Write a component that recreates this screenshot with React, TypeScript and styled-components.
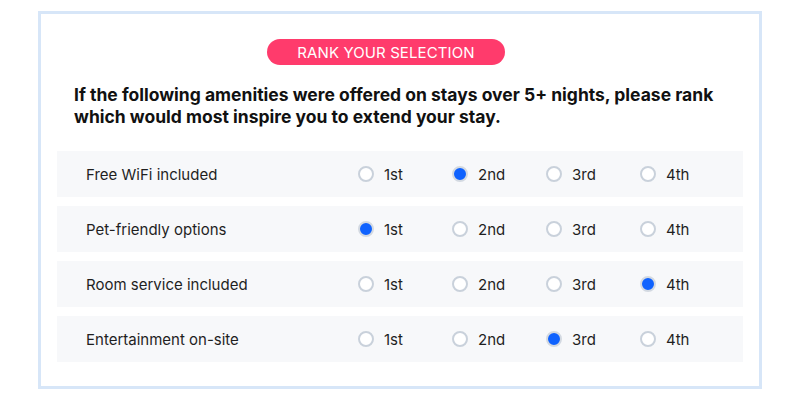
import React from "react";
import styled, { createGlobalStyle } from "styled-components";

const Global = createGlobalStyle`
  html, body { margin: 0; padding: 0; background: #ffffff; }
  body { font-family: "Inter", "Open Sans", sans-serif; }
  * { box-sizing: border-box; }
`;

const Page = styled.div`
  width: 800px;
  height: 400px;
  padding-top: 11px;
  display: flex;
  justify-content: center;
  align-items: flex-start;
`;

const Card = styled.div`
  width: 724px;
  height: 378px;
  border: 3px solid #d7e6f8;
  background: #ffffff;
  padding: 25px 16px 0 16px;
  display: flex;
  flex-direction: column;
`;

const PillWrap = styled.div`
  display: flex;
  justify-content: center;
  padding-right: 28px;
`;

const Pill = styled.div`
  height: 26px;
  width: 238px;
  border-radius: 13px;
  background: #ff3b6c;
  color: #ffffff;
  font-size: 15px;
  font-weight: 400;
  letter-spacing: 0.1px;
  display: flex;
  align-items: center;
  justify-content: center;
`;

const Heading = styled.h2`
  margin: 19px 0 0 17px;
  font-size: 17.5px;
  line-height: 22px;
  font-weight: 700;
  color: #111111;
`;

const Rows = styled.div`
  margin-top: 23px;
  display: flex;
  flex-direction: column;
  gap: 9px;
`;

const Row = styled.div`
  height: 46px;
  background: #f7f8fa;
  display: grid;
  grid-template-columns: 1fr repeat(4, 94px);
  align-items: center;
  padding: 0 9px 0 29px;
`;

const Label = styled.span`
  font-size: 15px;
  color: #1f1f1f;
`;

const Option = styled.label`
  display: flex;
  align-items: center;
  gap: 10px;
  font-size: 15px;
  color: #1f1f1f;
`;

const Radio = styled.span<{ $checked: boolean }>`
  width: 16px;
  height: 16px;
  border-radius: 50%;
  border: 2px solid ${(p) => (p.$checked ? "#d3d9e1" : "#c9d1db")};
  background: ${(p) => (p.$checked ? "#0f62fe" : "#ffffff")};
  flex: none;
`;

const items: { label: string; sel: number }[] = [
  { label: "Free WiFi included", sel: 1 },
  { label: "Pet-friendly options", sel: 0 },
  { label: "Room service included", sel: 3 },
  { label: "Entertainment on-site", sel: 2 },
];

const ranks = ["1st", "2nd", "3rd", "4th"];

export default function App() {
  return (
    <>
      <Global />
      <Page>
        <Card>
          <PillWrap>
            <Pill>RANK YOUR SELECTION</Pill>
          </PillWrap>
          <Heading>
            If the following amenities were offered on stays over 5+ nights, please rank
            which would most inspire you to extend your stay.
          </Heading>
          <Rows>
            {items.map((it) => (
              <Row key={it.label}>
                <Label>{it.label}</Label>
                {ranks.map((r, i) => (
                  <Option key={r}>
                    <Radio $checked={i === it.sel} />
                    {r}
                  </Option>
                ))}
              </Row>
            ))}
          </Rows>
        </Card>
      </Page>
    </>
  );
}
